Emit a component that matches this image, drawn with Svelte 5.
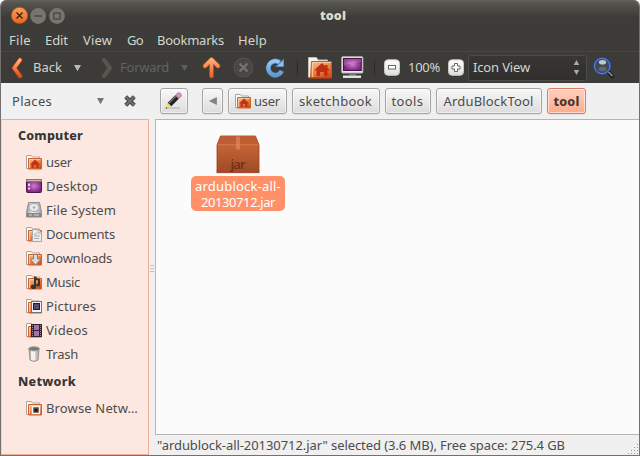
<script>
  const menus = [
    { label: 'File', x: 8, w: 22 },
    { label: 'Edit', x: 14, w: 23 },
    { label: 'View', x: 15, w: 29 },
    { label: 'Go', x: 15, w: 16 },
    { label: 'Bookmarks', x: 14, w: 67 },
    { label: 'Help', x: 14, w: 29 }
  ];
  const places = [
    { label: 'user', icon: 'home', w: 26 },
    { label: 'Desktop', icon: 'desktop', w: 52 },
    { label: 'File System', icon: 'disk', w: 70 },
    { label: 'Documents', icon: 'doc', w: 69 },
    { label: 'Downloads', icon: 'down', w: 66 },
    { label: 'Music', icon: 'music', w: 34 },
    { label: 'Pictures', icon: 'pic', w: 50 },
    { label: 'Videos', icon: 'video', w: 42 },
    { label: 'Trash', icon: 'trash', w: 32 }
  ];
  const crumbs = [
    { label: 'user', w: 59, t: 26, icon: true },
    { label: 'sketchbook', w: 88, t: 73 },
    { label: 'tools', w: 46, t: 32 },
    { label: 'ArduBlockTool', w: 106, t: 90 },
    { label: 'tool', w: 39, t: 26, active: true }
  ];

  // Tracks a label out (or in) so that it fills its allotted width.
  function track(node, width) {
    const natural = node.getBoundingClientRect().width;
    const n = node.textContent.length;
    node.style.letterSpacing = `${(width - natural) / n}px`;
  }
</script>

{#snippet glyph(kind)}
  <svg class="glyph" viewBox="0 0 16 16" width="16" height="16">
    {#if kind === 'desktop'}
      <rect x=".5" y="1.5" width="15" height="13" rx="1" fill="url(#purple)" stroke="#4c174e" />
      <path d="M0 1h16v3H0z" fill="#7e7958" /><path d="M1 2h14v1H1z" fill="#c5c39c" />
      <path d="M2 5.500h2v2.500H2zM2 9.500h2v2H2z" fill="#e9d3ea" />
    {:else if kind === 'disk'}
      <path d="M2.500 .5h11l2 10v4.500h-15v-4.500z" fill="url(#metal)" stroke="#8d8d8d" />
      <ellipse cx="8" cy="5.500" rx="5" ry="4" fill="#e9e9e9" stroke="#aaa" />
      <circle cx="8" cy="5.500" r="1.300" fill="#aaa" />
      <path d="M1 11h14v4H1z" fill="#878787" /><path d="M3 13h3M8 13h5" stroke="#d8d8d8" />
    {:else if kind === 'trash'}
      <path d="M3 3l1 11q4 3 8 0l1-11z" fill="url(#metal)" stroke="#959595" />
      <path d="M7 5v9" stroke="#f6efec" stroke-width="4" />
      <ellipse cx="8" cy="2.800" rx="5.500" ry="2.100" fill="#777" stroke="#a5a5a5" />
    {:else}
      <path d="M.5 14.500V1.500h5l1 1.500h7V6H3v8.500z" fill="#fff" stroke="#a8a5a1" />
      <path d="M2.500 4.500h13v10.500h-13z" fill="url(#folder)" stroke="#cc622d" />
      <path d="M3.500 14V5.500h11" fill="none" stroke="#ffcfa2" stroke-opacity=".8" />
      {#if kind === 'home'}
        <path d="M9 5.500l-5 5h1.500V14h2.300v-3h2.400v3h2.300v-3.500H14z" fill="#bd3417" />
      {:else if kind === 'doc'}
        <path d="M6.500 3.500h6l3 3v9h-9z" fill="#ededea" stroke="#a9a9a4" />
        <path d="M12 4v3h3M8 8h3M8 10h6M8 12.500h5" fill="none" stroke="#aaa" />
      {:else if kind === 'down'}
        <path d="M7.500 4.500h4V9H15l-5.500 6L4 9h3.500z" fill="#dadada" stroke="#84827f" />
      {:else if kind === 'music'}
        <path d="M9 2.500v9M9 3q2 3 4 3v5" fill="none" stroke="#353535" stroke-width="2" />
        <ellipse cx="7.500" cy="12.700" rx="2.700" ry="2.300" fill="#353535" />
        <ellipse cx="12" cy="11" rx="2" ry="1.500" fill="#353535" />
      {:else if kind === 'pic'}
        <rect x="5.500" y="3.500" width="10" height="11" fill="#f5f5f5" stroke="#77736f" />
        <rect x="7.500" y="5.500" width="6" height="6" fill="#5b4a74" stroke="#241d2d" />
      {:else if kind === 'video'}
        <path d="M5 2h11v13H5z" fill="#2f252c" /><path d="M8 3h5v5H8zM8 9h5v5H8z" fill="#a871ae" />
        <path d="M6.500 3v12M14.500 3v12" stroke="#e5794b" stroke-dasharray="1 1" />
      {:else if kind === 'net'}
        <rect x="6.500" y="6.500" width="7" height="7" fill="#4b4b49" stroke="#f7f4ec" stroke-width="1.500" />
        <path d="M8.500 9h3v2.500h-3z" fill="#171717" />
      {/if}
    {/if}
  </svg>
{/snippet}

{#snippet tri(color, ml)}
  <svg width="9" height="8" viewBox="0 0 9 8" style:margin-left="{ml}px"><path d="M1 .9h7L4.500 7.300z" fill={color} /></svg>
{/snippet}

<svg class="defs" width="0" height="0">
  <defs>
    <linearGradient id="orange" x2="0" y2="1"><stop stop-color="#ffb679" /><stop offset="1" stop-color="#e84d16" /></linearGradient>
    <linearGradient id="folder" x2=".6" y2="1"><stop stop-color="#f7c797" /><stop offset=".5" stop-color="#ee8d50" /><stop offset="1" stop-color="#d94e1c" /></linearGradient>
    <radialGradient id="purple"><stop stop-color="#d27bd0" /><stop offset="1" stop-color="#7d2583" /></radialGradient>
    <linearGradient id="metal"><stop stop-color="#999" /><stop offset=".4" stop-color="#efefef" /><stop offset="1" stop-color="#a4a4a4" /></linearGradient>
    <linearGradient id="box" x2="0" y2="1"><stop stop-color="#d06c3e" /><stop offset="1" stop-color="#a04a25" /></linearGradient>
    <linearGradient id="blue" x2="0" y2="1"><stop stop-color="#9bc7ee" /><stop offset="1" stop-color="#5e99d5" /></linearGradient>
    <linearGradient id="btn" x2="0" y2="1"><stop stop-color="#fff" /><stop offset="1" stop-color="#dedede" /></linearGradient>
    <linearGradient id="knob" x2="0" y2="1"><stop stop-color="#ff9d55" /><stop offset="1" stop-color="#e4661f" /></linearGradient>
  </defs>
</svg>

<div class="window">
  <header>
    <div class="titlebar">
      <svg class="controls" width="56" height="20" viewBox="0 0 56 20">
        <circle cx="8.500" cy="9.500" r="8.200" fill="url(#knob)" stroke="#a94c1b" stroke-width=".6" />
        <path d="M5.500 6.500l6 6M11.500 6.500l-6 6" stroke="#392015" stroke-width="1.300" />
        <circle cx="27.200" cy="10" r="7.900" fill="#77756d" /><path d="M23.500 10h7.500" stroke="#47463f" stroke-width="1.300" />
        <circle cx="46" cy="10" r="7.900" fill="#77756d" /><rect x="42.800" y="7" width="6.300" height="6" fill="none" stroke="#47463f" stroke-width="1.300" />
      </svg>
      <span class="title"><b use:track={26}>tool</b></span>
    </div>
    <nav>
      {#each menus as m}
        <span class="slot" style:width="{m.w}px" style:margin-left="{m.x}px"><span use:track={m.w}>{m.label}</span></span>
      {/each}
    </nav>
    <div class="toolbar">
      <svg class="chev" width="12" height="22" viewBox="0 0 12 22"><path d="M9 3L3.200 11l5.800 8" fill="none" stroke="#cf4111" stroke-width="4.500" stroke-linecap="round" stroke-linejoin="round" /><path d="M9 3L3.200 11l5.800 8" fill="none" stroke="url(#orange)" stroke-width="3.200" stroke-linecap="round" stroke-linejoin="round" /></svg>
      <span class="slot back"><span use:track={29}>Back</span></span>
      {@render tri('#b5bcbc', 11)}
      <svg class="fwd-icon" width="12" height="22" viewBox="0 0 12 22"><path d="M3 3l6 8-6 8" fill="none" stroke="#5a544f" stroke-width="4" stroke-linecap="round" stroke-linejoin="round" /></svg>
      <span class="slot fwd"><span use:track={49}>Forward</span></span>
      {@render tri('#566065', 11)}
      <svg class="up" width="20" height="23" viewBox="0 0 20 23"><path d="M9.500 20V4M3 10L9.500 3.500 16 10" fill="none" stroke="#d4480f" stroke-width="4.600" stroke-linecap="round" stroke-linejoin="round" /><path d="M9.500 20V4M3 10L9.500 3.500 16 10" fill="none" stroke="url(#upg)" stroke-width="3.200" stroke-linecap="round" stroke-linejoin="round" /><defs><linearGradient id="upg" gradientUnits="userSpaceOnUse" x1="0" y1="0" x2="0" y2="22"><stop stop-color="#ffc08a" /><stop offset="1" stop-color="#ee5a1c" /></linearGradient></defs></svg>
      <svg class="stop" width="21" height="21" viewBox="0 0 21 21"><circle cx="10.500" cy="10.500" r="9.500" fill="#494744" stroke="#55534f" /><path d="M6.500 6.500l8 8M14.500 6.500l-8 8" stroke="#77746f" stroke-width="2.300" /></svg>
      <svg class="reload" width="21" height="22" viewBox="0 0 21 22"><path d="M14.500 5.500A7 7 0 1 0 16.700 14" fill="none" stroke="#4a84bd" stroke-width="5" /><path d="M19 1.500v8.500h-9z" fill="#4a84bd" /><path d="M14.500 5.500A7 7 0 1 0 16.700 14" fill="none" stroke="url(#blue)" stroke-width="3.800" /><path d="M18.300 3.200v6.100h-6.300z" fill="#91beea" /></svg>
      <i class="sep"></i>
      <svg class="bighome" width="24" height="22" viewBox="0 0 24 22"><path d="M.5 20.500V.5h8l1.500 2.500h9.500v5H4v12.500z" fill="#f7f5f3" stroke="#c2bdb8" /><path d="M3.500 4.500h20v16.500H2.500z" fill="url(#folder)" stroke="#c9581f" /><path d="M4.500 20V5.500H23" fill="none" stroke="#ffd0a5" stroke-opacity=".8" /><path d="M14 6L6 13.500h2.500V19H12v-4h4v4h3.500v-5.500H22L19.500 11V8H17v1z" fill="#c22e12" /><path d="M0 21h24" stroke="#9d3b18" /></svg>
      <svg class="monitor" width="23" height="23" viewBox="0 0 23 23"><rect x=".8" y=".8" width="21" height="16.200" rx=".8" fill="#e9e7e5" stroke="#bdb9b6" /><rect x="2.500" y="2.500" width="17.800" height="12" fill="url(#purple)" stroke="#4c134f" /><path d="M3 3h17v3L3 9z" fill="#fff" opacity=".16" /><path d="M8 17.500h7v2H8z" fill="#777" /><path d="M2 19.500h18v2.500H2z" rx="1" fill="#e3e1df" /></svg>
      <i class="sep second"></i>
      <svg class="minus" width="16" height="17" viewBox="0 0 16 17"><rect x=".5" y=".8" width="15" height="15.500" rx="3.500" fill="url(#btn)" stroke="#c8c7c4" /><rect x="4.500" y="6.500" width="7" height="3.500" fill="#fff" stroke="#666" /></svg>
      <span class="slot pct"><span use:track={32}>100%</span></span>
      <svg class="plus" width="16" height="17" viewBox="0 0 16 17"><rect x=".5" y=".8" width="15" height="15.500" rx="3.500" fill="url(#btn)" stroke="#c8c7c4" /><path d="M6.500 4.500h3v2.500H12v3H9.500v2.500h-3V10H4V7h2.500z" fill="#fff" stroke="#666" /></svg>
      <div class="combo">
        <span use:track={57}>Icon View</span>
        <svg width="7" height="17" viewBox="0 0 7 17"><path d="M3.500 1L6.300 6H.7zM3.500 16L.7 11h5.600z" fill="#a5aaaa" /></svg>
      </div>
      <svg class="search" width="22" height="23" viewBox="0 0 22 23"><path d="M14 14.500l5.500 6" stroke="#222" stroke-width="4" stroke-linecap="round" /><path d="M14 14.500l5.500 5.500" stroke="#999" stroke-width="1.300" /><circle cx="9.200" cy="10" r="7.700" fill="#41484f" stroke="#284eb0" stroke-width="2.200" /><circle cx="9.200" cy="10" r="7.700" fill="none" stroke="#6e92e0" stroke-width=".8" /><ellipse cx="9.500" cy="6.200" rx="3.600" ry="2.300" fill="#e5e9ee" opacity=".8" /><ellipse cx="9.500" cy="13" rx="4" ry="2.500" fill="#8c9395" opacity=".4" /></svg>
    </div>
  </header>

  <div class="body">
    <aside>
      <div class="sidehead">
        <span class="slot places"><span use:track={40}>Places</span></span>
        {@render tri('#777572', 0)}
        <svg class="close" width="14" height="14" viewBox="0 0 14 14"><path d="M2.700 2.700l8.600 8.600M11.300 2.700l-8.600 8.600" stroke="#4e4e4c" stroke-width="4.200" /><path d="M2.500 2.500l9 9M11.500 2.500l-9 9" stroke="#757573" stroke-width="1.600" /></svg>
      </div>
      <div class="list">
        <h2><span use:track={65}>Computer</span></h2>
        <ul>
          {#each places as p}
            <li>{@render glyph(p.icon)}<span use:track={p.w}>{p.label}</span></li>
          {/each}
        </ul>
        <h2 class="net"><span use:track={58}>Network</span></h2>
        <ul>
          <li>{@render glyph('net')}<span use:track={92}>Browse Netw…</span></li>
        </ul>
      </div>
    </aside>
    <div class="grip"><i></i><i></i><i></i></div>
    <main>
      <div class="path">
        <div class="btn edit">
          <svg width="20" height="18" viewBox="0 0 20 18"><path d="M4 16h12" stroke="#aaa" stroke-width="1.500" opacity=".6" /><path d="M5.500 12.500L13.500 4.500" stroke="#242424" stroke-width="5.200" /><path d="M5 11L12 4" stroke="#777" stroke-width="1.200" /><path d="M3 10.500l4.500 4.200L2 16.500z" fill="#eedb70" /><path d="M2.200 15l1.400 1.200-2 .6z" fill="#333" /><path d="M11.800 2.700l3.700 3.700" stroke="#c9c9c9" stroke-width="1.600" /><circle cx="14.900" cy="3.200" r="2.500" fill="#dc94c8" stroke="#a4658f" stroke-width=".6" /></svg>
        </div>
        <div class="btn left"><svg width="8" height="8" viewBox="0 0 8 8"><path d="M7.500.5v7L.5 4z" fill="#858585" stroke="#777" stroke-width=".6" /></svg></div>
        {#each crumbs as c}
          <div class="btn" class:active={c.active} style:width="{c.w}px">
            {#if c.icon}{@render glyph('home')}{/if}
            <span class="slot" style:width="{c.t}px"><span use:track={c.t}>{c.label}</span></span>
          </div>
        {/each}
      </div>
      <div class="view">
        <div class="file">
          <svg width="46" height="40" viewBox="0 0 46 40">
            <path d="M1 35h44v3.500H1z" fill="#888" opacity=".35" />
            <path d="M5.500 1h35L44 10v27.500H2V10z" fill="url(#box)" stroke="#994019" stroke-width=".8" />
            <path d="M5.800 1.500h34.400L43.500 9.500h-41z" fill="#c05e33" /><path d="M2.500 9.800h41" stroke="#dd7e50" stroke-width=".8" />
            <path d="M21 1.500h4v13h-4z" fill="#dd9068" opacity=".6" />
            <text x="23" y="34" text-anchor="middle" textLength="15" class="jar">jar</text>
          </svg>
          <div class="name"><span use:track={86}>ardublock-all-</span><span use:track={74}>20130712.jar</span></div>
        </div>
      </div>
      <footer>
        <span use:track={408}>"ardublock-all-20130712.jar" selected (3.6 MB), Free space: 275.4 GB</span>
        <svg width="12" height="12" viewBox="0 0 12 12"><path d="M10 1.500h1M7 4.500h1M10 4.500h1M4 7.500h1M7 7.500h1M10 7.500h1M1 10.500h1M4 10.500h1M7 10.500h1M10 10.500h1" stroke="#999" /></svg>
      </footer>
    </main>
  </div>
</div>

<style>
  :global(body) { margin: 0; background: #fff; }
  * { box-sizing: border-box; }
  .defs { position: absolute; }
  svg { display: block; flex: none; }
  .window { width: 640px; height: 456px; overflow: hidden; display: flex; flex-direction: column; border: solid #75706f; border-width: 0 1px 1px; border-radius: 6px 6px 0 0; background: #f0f0f0; color: #4c4c4c; font: 13px/16px "Noto Sans", "Open Sans", sans-serif; white-space: nowrap; }
  header { height: 83px; flex: none; background: linear-gradient(#62615b, #55544e 3px, #3d3c38 17px, #3c3b37); color: #d3d5d0; }
  .slot { display: block; flex: none; }
  .titlebar { height: 30px; display: flex; padding: 6px 0 0 10px; }
  .title { margin-left: 253px; padding-top: 2px; font-size: 12.5px; font-weight: 800; color: #dfdbc9; }
  nav { height: 21px; display: flex; padding-top: 2px; }
  .toolbar { height: 32px; display: flex; align-items: center; border-top: 1px solid #474641; padding-left: 10px; }
  .toolbar .slot, .combo span { margin-top: -2px; }
  .back { width: 29px; margin-left: 10px; }
  .fwd-icon { margin-left: 19px; }
  .fwd { width: 49px; margin-left: 7px; color: #5f6567; }
  .up { margin-left: 13px; }
  .stop { margin-left: 11px; }
  .reload { margin-left: 11px; }
  .sep { width: 1px; height: 14px; margin-left: 11px; background: #292825; }
  .bighome { margin-left: 10px; }
  .monitor { margin-left: 9px; }
  .second { margin-left: 10px; }
  .minus { margin-left: 9px; }
  .pct { width: 32px; margin-left: 8px; }
  .plus { margin-left: 8px; }
  .combo { width: 119px; height: 26px; margin-left: 4px; padding: 0 6px 0 4px; display: flex; justify-content: space-between; align-items: center; border: 1px solid #4d4c47; border-radius: 3px; background: linear-gradient(#373632, #302f2c); }
  .search { margin-left: 6px; }
  .body { flex: 1; min-height: 0; display: flex; }
  aside { width: 148px; display: flex; flex-direction: column; }
  .sidehead { height: 36px; flex: none; display: flex; align-items: center; padding-left: 11px; }
  .places { width: 84px; }
  .close { margin-left: 18px; }
  .list { flex: 1; border: 1px solid #edae98; border-left-color: #f7d1c4; background: #fce8e1; padding-top: 7px; }
  h2 { margin: 0 0 6px 16px; font-size: 12.5px; line-height: 17px; font-weight: 800; color: #363636; }
  h2.net { margin: 7px 0 6px 16px; }
  ul { list-style: none; margin: 0; padding: 0 0 0 24px; }
  li { height: 24px; display: flex; align-items: center; gap: 4px; }
  .grip { width: 6px; padding-bottom: 1px; display: flex; flex-direction: column; justify-content: center; align-items: center; gap: 2px; }
  .grip i { width: 4px; height: 1px; background: #c2c2c2; }
  main { flex: 1; min-width: 0; display: flex; flex-direction: column; }
  .path { height: 36px; flex: none; display: flex; gap: 5px; padding: 5px 0 0 5px; }
  .btn { height: 26px; flex: none; display: flex; align-items: center; justify-content: center; gap: 4px; border: 1px solid #a6a5a4; border-radius: 3px; background: linear-gradient(#f8f8f8, #dcdcdc); box-shadow: inset 0 0 0 1px #fff8, 0 1px 1px #0001; }
  .btn .slot { margin-left: -1px; }
  .edit { width: 28px; margin-right: 9px; }
  .left { width: 21px; }
  .active { border-color: #df7e5c; background: linear-gradient(#ffd0bf, #ffab8b); font-size: 12.5px; font-weight: 800; color: #4a352e; }
  .active .slot { margin-left: 0; padding-top: 1px; }
  .view { height: 316px; flex: none; border: 1px solid #b9b4b4; border-right-width: 0; background: #fbfbfb; padding: 15px 0 0 35px; }
  .file { width: 94px; display: flex; flex-direction: column; align-items: center; }
  .jar { font: 600 13px "Open Sans", sans-serif; fill: #6d2f16; }
  .name { width: 94px; height: 35px; margin-top: 1px; padding-top: 2px; border-radius: 5px; background: #ff9068; color: #fff; display: flex; flex-direction: column; align-items: center; }
  footer { flex: 1; display: flex; align-items: center; justify-content: space-between; padding-left: 2px; }
  footer svg { align-self: flex-end; }
</style>
